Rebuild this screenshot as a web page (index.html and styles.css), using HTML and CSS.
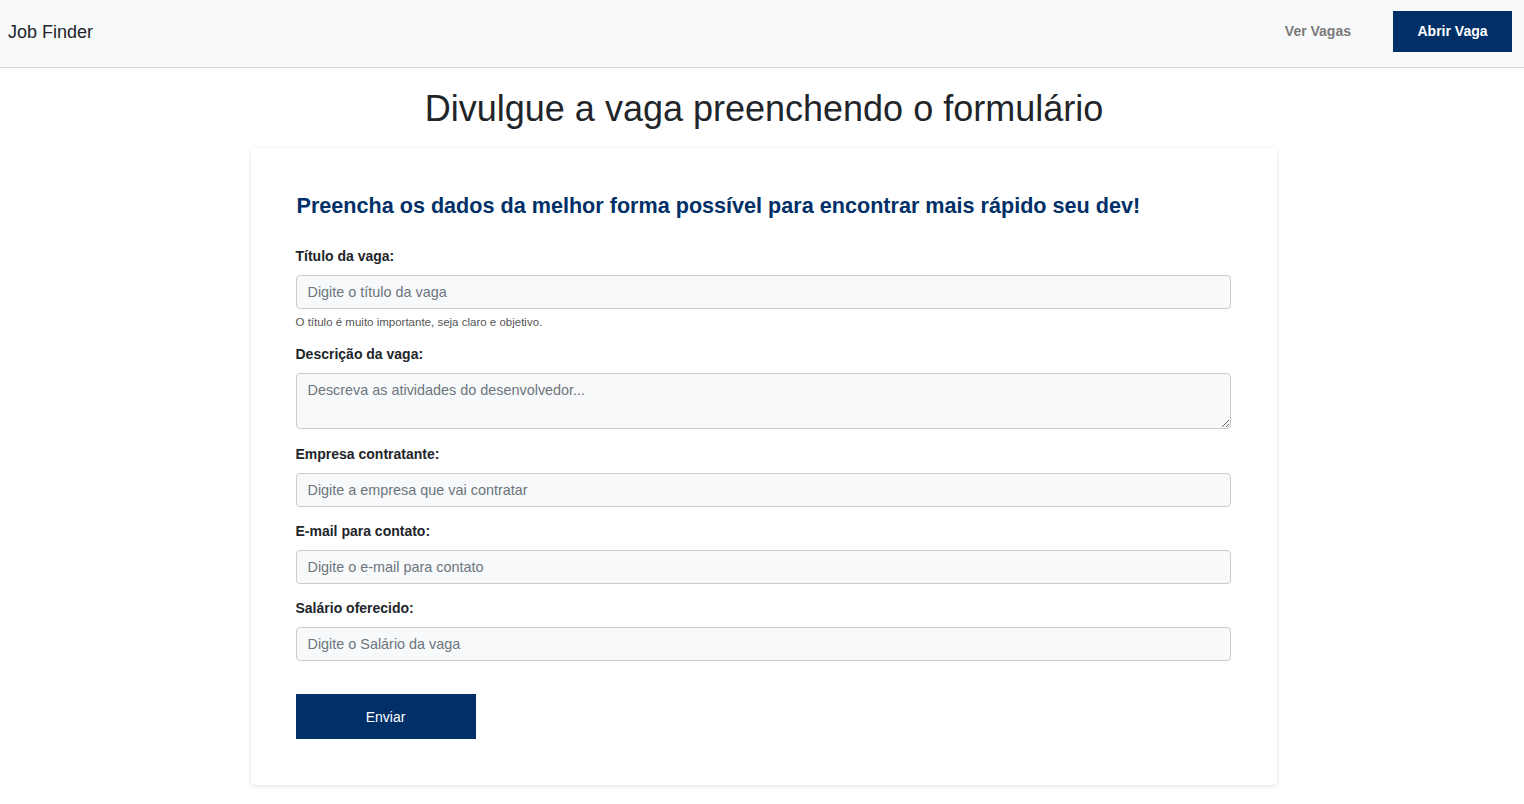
FILE: index.html
```html
<!DOCTYPE html>
<html lang="pt-BR">
<head>
<meta charset="utf-8">
<title>Job Finder</title>
<link rel="stylesheet" href="styles.css">
</head>
<body>
<header class="navbar">
  <a class="brand" href="#">Job Finder</a>
  <nav class="nav-links">
    <a class="nav-link" href="#">Ver Vagas</a>
    <a class="nav-btn" href="#">Abrir Vaga</a>
  </nav>
</header>
<main class="main">
  <h1 class="page-title">Divulgue a vaga preenchendo o formulário</h1>
  <section class="card">
    <h2 class="card-title">Preencha os dados da melhor forma possível para encontrar mais rápido seu dev!</h2>
    <form class="form">
      <div class="group">
        <label class="label" for="title">Título da vaga:</label>
        <input class="input" id="title" type="text" placeholder="Digite o título da vaga">
        <small class="hint">O título é muito importante, seja claro e objetivo.</small>
      </div>
      <div class="group group-area">
        <label class="label" for="desc">Descrição da vaga:</label>
        <textarea class="input textarea" id="desc" placeholder="Descreva as atividades do desenvolvedor..."></textarea>
      </div>
      <div class="group">
        <label class="label" for="company">Empresa contratante:</label>
        <input class="input" id="company" type="text" placeholder="Digite a empresa que vai contratar">
      </div>
      <div class="group">
        <label class="label" for="email">E-mail para contato:</label>
        <input class="input" id="email" type="text" placeholder="Digite o e-mail para contato">
      </div>
      <div class="group">
        <label class="label" for="salary">Salário oferecido:</label>
        <input class="input" id="salary" type="text" placeholder="Digite o Salário da vaga">
      </div>
      <button class="submit" type="button">Enviar</button>
    </form>
  </section>
</main>
</body>
</html>
```

FILE: styles.css
```css
* { box-sizing: border-box; }
html, body { margin: 0; padding: 0; }
body {
  font-family: "Liberation Sans", Arial, sans-serif;
  color: #212529;
  background: #fff;
}
.navbar {
  height: 68px;
  background: #f8f9fa;
  border-bottom: 1px solid #d3d4d5;
  display: flex;
  align-items: center;
  justify-content: space-between;
  padding: 0 12px 0 8px;
}
.brand {
  font-size: 18px;
  color: #212529;
  text-decoration: none;
  margin-top: -3px;
}
.nav-links {
  display: flex;
  align-items: center;
  margin-top: -5px;
}
.nav-link {
  font-size: 14px;
  font-weight: bold;
  color: #7a7a7a;
  text-decoration: none;
  margin-right: 42px;
}
.nav-btn {
  display: flex;
  align-items: center;
  justify-content: center;
  width: 119px;
  height: 41px;
  background: #003067;
  color: #fff;
  font-size: 14px;
  font-weight: bold;
  text-decoration: none;
}
.main {
  display: flex;
  flex-direction: column;
  align-items: center;
  padding-left: 4px;
}
.page-title {
  font-size: 36px;
  font-weight: normal;
  line-height: 43px;
  margin: 19px 0 18px;
  color: #212529;
}
.card {
  width: 1026px;
  margin: 0 0 20px -1px;
  background: #fff;
  border-radius: 4px;
  box-shadow: 0 1px 4px rgba(0,0,0,0.12);
  padding: 45px 46px 46px 45px;
}
.card-title {
  font-size: 21.6px;
  font-weight: bold;
  color: #003067;
  line-height: 26px;
  margin: 0 0 29px 1px;
}
.group {
  display: flex;
  flex-direction: column;
  margin-bottom: 16px;
}
.group-area {
  margin-bottom: 17px;
}
.label {
  font-size: 14px;
  font-weight: bold;
  line-height: 16px;
  margin-bottom: 11px;
  color: #212529;
}
.input {
  height: 34px;
  border: 1px solid #ccc;
  border-radius: 4px;
  background: #f8f9fa;
  padding: 0 11px;
  font-family: "Liberation Sans", Arial, sans-serif;
  font-size: 14.4px;
  color: #495057;
}
.input::placeholder { color: #6c757d; }
.textarea {
  height: 56px;
  padding: 8px 11px;
  resize: vertical;
}
.hint {
  font-size: 11.5px;
  line-height: 14px;
  margin-top: 6px;
  margin-bottom: 1px;
  color: #555;
}
.submit {
  margin-top: 17px;
  width: 180px;
  height: 45px;
  border: none;
  background: #003067;
  color: #fff;
  font-family: "Liberation Sans", Arial, sans-serif;
  font-size: 14px;
  cursor: pointer;
}
```
